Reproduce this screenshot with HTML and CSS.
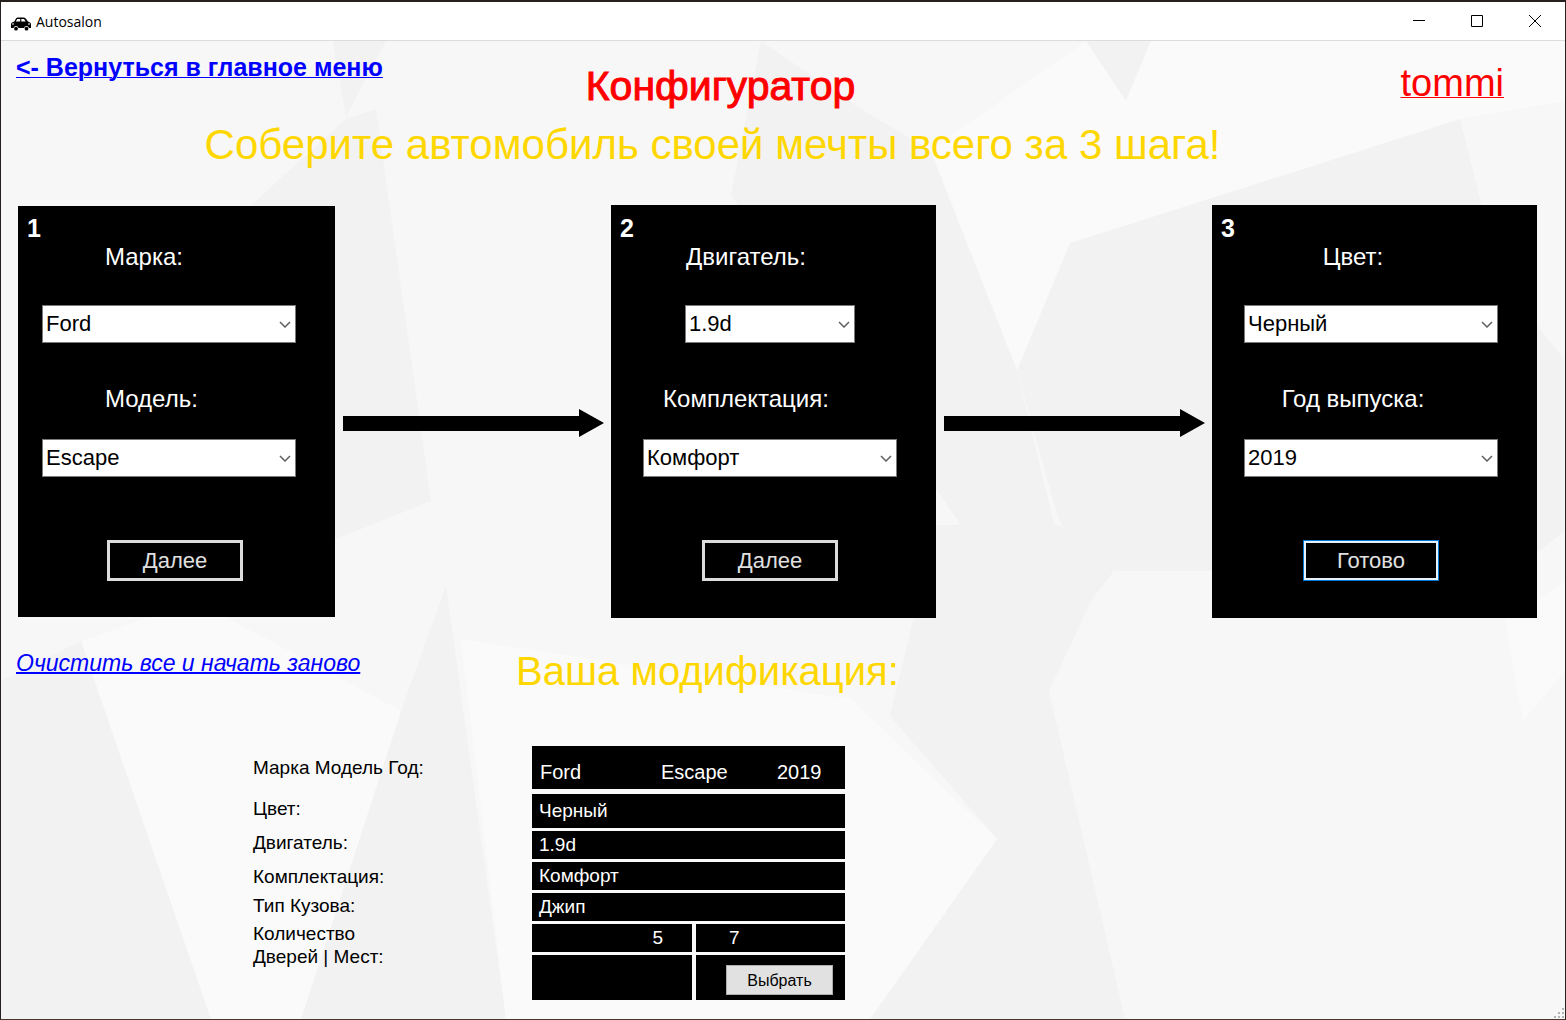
FILE: index.html
```html
<!DOCTYPE html>
<html lang="ru">
<head>
<meta charset="utf-8">
<title>Autosalon</title>
<link rel="stylesheet" href="styles.css">
</head>
<body>
<div class="window">
  <header class="titlebar">
    <svg class="app-icon" viewBox="0 0 20 14" width="20" height="14" aria-hidden="true">
      <path d="M5 1.500Q5.500.5 7 .5h5.500q1.500 0 2.200 1L17 4.600l2 .9q1 .6 1 2V11h-2a2.600 2.600 0 0 0-5 0H7.500a2.600 2.600 0 0 0-5 0H0V7.500q0-1.800 1.500-2.300L3.300 4.500z"/>
      <path fill="#fff" d="M6.200 2h3v2.600H4.800zM10.300 2h2.700l1.700 2.600h-4.400zM1 6.500h2v1H1zM17 6.500h2v1h-2z"/>
      <circle cx="5" cy="11.700" r="1.900"/><circle cx="15.500" cy="11.700" r="1.900"/>
    </svg>
    <span class="app-name">Autosalon</span>
    <div class="window-controls">
      <button type="button" aria-label="Свернуть"><svg viewBox="0 0 12 12" width="12" height="12"><path d="M0 5.500h12"/></svg></button>
      <button type="button" aria-label="Развернуть"><svg viewBox="0 0 12 12" width="12" height="12"><path d="M.5.5h11v11H.5z"/></svg></button>
      <button type="button" aria-label="Закрыть"><svg viewBox="0 0 12 12" width="12" height="12"><path d="M0 0l12 12M12 0L0 12"/></svg></button>
    </div>
  </header>

  <main class="content">
    <svg class="backdrop" viewBox="0 0 1564 978" preserveAspectRatio="none" aria-hidden="true">
      <g class="facet-dark">
        <path d="M332 0h53l-40 75z"/>
        <path d="M249 165l96-87 30-10 55 392-95 38z"/>
        <path d="M760 0l95 65 74 44 87 220 38 158-94-3-230-330z"/>
        <path d="M1084 0h66l-25 60z"/>
        <path d="M1016 329l53-127 390-124 40 160 64 80v172l-60 50-290-10H1080l-25-60z"/>
        <path d="M0 640l80-40 130 378H0z"/>
        <path d="M445 545l60 433H300l100-308z"/>
        <path d="M935 484h120l70 30-35 46-42 90 76 328H869l127-180-107-123z"/>
      </g>
      <g class="facet-light">
        <path d="M930 109l155-109 40 60 25-60h414v60l-105 18-390 124-53 127z"/>
        <path d="M80 600l115-40 205 110-100 308h-90z"/>
        <path d="M505 978l-45-380 390 60 146 140-127 180z"/>
        <path d="M1504 580l60-40v90l-42 50z"/>
      </g>
    </svg>

    <div class="top">
      <a class="back-link" href="#menu">&lt;- Вернуться в главное меню</a>
      <h1 class="title">Конфигуратор</h1>
      <a class="user-link" href="#user">tommi</a>
    </div>
    <p class="subtitle">Соберите автомобиль своей мечты всего за 3 шага!</p>

    <form class="steps">
      <fieldset class="step step-first">
        <legend class="step-number">1</legend>
        <div class="fields">
          <label class="step-label" for="brand">Марка:</label>
          <select class="combo" id="brand"><option>Ford</option></select>
          <label class="step-label step-label-next" for="model">Модель:</label>
          <select class="combo combo-next" id="model"><option>Escape</option></select>
          <button class="step-button" type="button">Далее</button>
        </div>
      </fieldset>
      <svg class="arrow" viewBox="0 0 261 28" preserveAspectRatio="none" aria-hidden="true"><path d="M0 7h236V0l25 14-25 14v-6H0z"/></svg>
      <fieldset class="step step-second">
        <legend class="step-number">2</legend>
        <div class="fields">
          <label class="step-label" for="engine">Двигатель:</label>
          <select class="combo combo-short" id="engine"><option>1.9d</option></select>
          <label class="step-label step-label-next" for="trim">Комплектация:</label>
          <select class="combo combo-next" id="trim"><option>Комфорт</option></select>
          <button class="step-button" type="button">Далее</button>
        </div>
      </fieldset>
      <svg class="arrow" viewBox="0 0 261 28" preserveAspectRatio="none" aria-hidden="true"><path d="M0 7h236V0l25 14-25 14v-6H0z"/></svg>
      <fieldset class="step step-third">
        <legend class="step-number">3</legend>
        <div class="fields">
          <label class="step-label" for="color">Цвет:</label>
          <select class="combo" id="color"><option>Черный</option></select>
          <label class="step-label step-label-next" for="year">Год выпуска:</label>
          <select class="combo combo-next" id="year"><option>2019</option></select>
          <button class="step-button step-button-active" type="button">Готово</button>
        </div>
      </fieldset>
    </form>

    <div class="result-head">
      <a class="reset-link" href="#reset">Очистить все и начать заново</a>
      <h2 class="result-title">Ваша модификация:</h2>
    </div>

    <div class="result">
      <ul class="names">
        <li class="name-model">Марка Модель Год:</li>
        <li class="name-color">Цвет:</li>
        <li class="name-engine">Двигатель:</li>
        <li class="name-trim">Комплектация:</li>
        <li>Тип Кузова:</li>
        <li>Количество<br>Дверей | Мест:</li>
      </ul>
      <div class="values">
        <div class="value value-model"><span>Ford</span><span>Escape</span><span>2019</span></div>
        <div class="value value-color">Черный</div>
        <div class="value">1.9d</div>
        <div class="value">Комфорт</div>
        <div class="value">Джип</div>
        <div class="pair"><div class="value value-doors">5</div><div class="value value-seats">7</div></div>
        <div class="pair"><div class="value"></div><div class="value value-action"><button class="choose" type="button">Выбрать</button></div></div>
      </div>
    </div>
    <svg class="grip" viewBox="0 0 12 12" width="12" height="12" aria-hidden="true"><path d="M9 1h2v2H9zM5 5h2v2H5zM9 5h2v2H9zM1 9h2v2H1zM5 9h2v2H5zM9 9h2v2H9z"/></svg>
  </main>
</div>
</body>
</html>
```

FILE: styles.css
```css
* { box-sizing: border-box; }

body {
  margin: 0;
  font-family: "Liberation Sans", Arial, sans-serif;
  color: #000;
}

.window {
  display: flex;
  flex-direction: column;
  min-height: 100vh;
  border: 1px solid #26211f;
  border-top-width: 2px;
  border-bottom-color: #4a342c;
}

/* Title bar */
.titlebar {
  display: flex;
  align-items: center;
  height: 39px;
  padding: 0 1px 0 10px;
  background: #fff;
  border-bottom: 1px solid #dcdcdc;
}
.app-icon { margin-top: 6px; }
.app-name {
  flex: 1;
  padding-left: 5px;
  font: 14px "Open Sans", "Noto Sans", sans-serif;
}
.window-controls { display: flex; }
.window-controls button {
  display: flex;
  align-items: center;
  justify-content: center;
  width: 58px;
  height: 38px;
  padding: 0;
  border: 0;
  background: none;
}
.window-controls path { fill: none; stroke: #000; }

/* Page */
.content {
  position: relative;
  flex: 1;
  padding: 0 28px 19px 15px;
  background: #f7f7f7;
  z-index: 0;
}
.backdrop {
  position: absolute;
  inset: 0;
  z-index: -1;
  width: 100%;
  height: 100%;
}
.facet-dark { fill: #f2f2f2; }
.facet-light { fill: #fafafa; }
.grip {
  position: absolute;
  right: 0;
  bottom: 0;
  fill: #b4b4b4;
}

.top {
  display: grid;
  grid-template-columns: 1fr auto 1fr;
  height: 80px;
}
.back-link {
  justify-self: start;
  padding-top: 12px;
  font-size: 25px;
  line-height: 28px;
  font-weight: bold;
  color: #00f;
  text-decoration-thickness: 1px;
}
.title {
  margin: 0;
  padding: 23px 112px 0 0;
  font-size: 41px;
  line-height: 44px;
  font-weight: normal;
  -webkit-text-stroke: 1px #f00;
  color: #f00;
}
.user-link {
  justify-self: end;
  padding: 20px 33px 0 0;
  font-size: 38px;
  line-height: 44px;
  color: #f00;
  text-decoration-thickness: 1px;
}
.subtitle {
  margin: 0;
  padding-right: 128px;
  font-size: 42px;
  line-height: 48px;
  text-align: center;
  color: #ffd700;
}

/* Steps */
.steps {
  display: flex;
  align-items: center;
  padding: 36px 0 0 2px;
}
.step {
  flex: none;
  min-width: 0;
  margin: 0;
  padding: 9px 9px 37px;
  border: 0;
  background: #000;
  color: #fff;
}
.step-first { width: 317px; padding: 8px 9px 36px; }
.step-second,
.step-third { width: 325px; }
.step-number {
  float: left;
  padding: 0;
  font-size: 25px;
  line-height: 29px;
  font-weight: bold;
}
.fields {
  clear: both;
  display: flex;
  flex-direction: column;
  align-items: center;
  width: 254px;
  margin-left: 23px;
}
.step-first .fields { margin-left: 15px; }

.step-label {
  align-self: stretch;
  font-size: 24px;
  line-height: 28px;
  text-align: center;
}
.step-first .step-label { padding-left: 63px; text-align: left; }
.step-second .step-label { padding-right: 48px; }
.step-third .step-label { padding-right: 36px; }
.step-label-next { margin-top: 42px; }

.combo {
  width: 254px;
  height: 38px;
  margin-top: 34px;
  padding: 0 3px 2px;
  border: 1px solid #7a7a7a;
  border-radius: 0;
  appearance: none;
  background: #fff url("data:image/svg+xml,%3Csvg xmlns='http://www.w3.org/2000/svg' width='12' height='8'%3E%3Cpath d='M1 2l5 5 5-5' fill='none' stroke='%23606060' stroke-width='1.500'/%3E%3C/svg%3E") no-repeat right 4px center;
  font: 22px "Liberation Sans", Arial, sans-serif;
  color: #000;
}
.combo-next { margin-top: 26px; }
.combo-short { width: 170px; }

.step-button {
  width: 136px;
  height: 41px;
  margin-top: 63px;
  padding: 0;
  border: 3px solid #dcdcdc;
  background: #000;
  font: 22px "Liberation Sans", Arial, sans-serif;
  color: #e0e0e0;
}
.step-first .step-button { align-self: flex-start; margin-left: 65px; }
.step-button-active {
  border-color: #e5f1fb;
  outline: 1px solid #0078d7;
  outline-offset: -1px;
}

.arrow {
  flex: 1;
  min-width: 0;
  height: 28px;
  margin: 22px 7px 0 8px;
}

/* Result */
.result-head {
  display: grid;
  grid-template-columns: 500px auto;
  justify-content: start;
  margin-top: 29px;
}
.reset-link {
  justify-self: start;
  padding-top: 2px;
  font-size: 23px;
  line-height: 28px;
  font-style: italic;
  color: #00f;
  text-decoration-thickness: 2px;
}
.result-title {
  margin: 0;
  font-size: 40px;
  line-height: 48px;
  font-weight: normal;
  color: #ffd700;
}

.result {
  display: grid;
  grid-template-columns: 279px 313px;
  margin: 51px 0 0 237px;
}
.names {
  list-style: none;
  margin: 0;
  padding: 10px 0 0;
  font-size: 19px;
  line-height: 23px;
}
.names li { margin-bottom: 5px; }
.names .name-model { margin-bottom: 18px; }
.names .name-color,
.names .name-engine { margin-bottom: 11px; }
.names .name-trim { margin-bottom: 6px; }

.values {
  display: grid;
  gap: 3px;
  font-size: 19px;
  line-height: 28px;
  color: #fff;
}
.value {
  min-height: 28px;
  padding-left: 7px;
  background: #000;
}
.value-model {
  display: grid;
  grid-template-columns: 121px 116px auto;
  height: 43px;
  margin-bottom: 2px;
  padding: 12px 0 0 8px;
  font-size: 20px;
}
.value-color { line-height: 34px; }
.pair {
  display: grid;
  grid-template-columns: 160px 149px;
  gap: 4px;
}
.value-doors { padding-right: 29px; text-align: right; }
.value-seats { padding-left: 33px; }
.value-action { height: 45px; padding: 10px 0 0 30px; }
.choose {
  display: block;
  width: 107px;
  height: 30px;
  padding: 2px 0 0;
  border: 1px solid #adadad;
  background: #e1e1e1;
  font: 16px "Liberation Sans", Arial, sans-serif;
  color: #000;
}
```
